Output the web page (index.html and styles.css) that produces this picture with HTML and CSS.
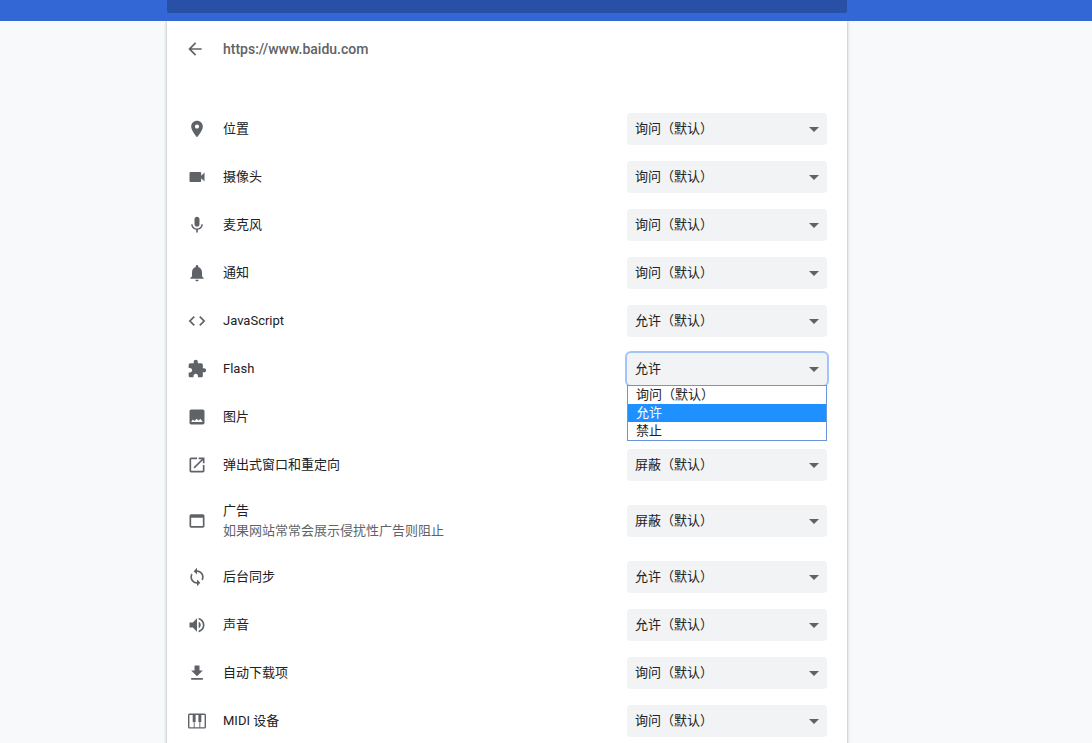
FILE: index.html
```
<!DOCTYPE html>
<html lang="zh-CN">
<head>
<meta charset="utf-8">
<title>设置</title>
<link rel="stylesheet" href="styles.css">
</head>
<body>
<header class="toolbar columns"><div class="search"></div></header>
<main class="columns">
<section class="card">
  <div class="page-head">
    <button class="back" type="button" aria-label="返回"><svg class="icon" viewBox="0 0 24 24"><path d="M20 11H7.83l5.59-5.59L12 4l-8 8 8 8 1.41-1.41L7.83 13H20v-2z"/></svg></button>
    <h1 class="title">https://www.baidu.com</h1>
  </div>
  <div class="list">
    <div class="row">
      <svg class="icon" viewBox="0 0 24 24"><path d="M12 2C8.13 2 5 5.13 5 9c0 5.25 7 13 7 13s7-7.75 7-13c0-3.87-3.13-7-7-7zm0 9.500c-1.380 0-2.500-1.120-2.500-2.500s1.120-2.500 2.500-2.500 2.500 1.120 2.500 2.500-1.120 2.500-2.500 2.500z"/></svg>
      <label class="label" for="location">位置</label>
      <div class="field"><select class="select" id="location"><option>询问（默认）</option><option>允许</option><option>禁止</option></select></div>
    </div>
    <div class="row">
      <svg class="icon" viewBox="0 0 24 24"><path d="M17 10.500V7c0-.55-.45-1-1-1H4c-.55 0-1 .45-1 1v10c0 .55.45 1 1 1h12c.55 0 1-.45 1-1v-3.500l4 4v-11l-4 4z"/></svg>
      <label class="label" for="camera">摄像头</label>
      <div class="field"><select class="select" id="camera"><option>询问（默认）</option><option>允许</option><option>禁止</option></select></div>
    </div>
    <div class="row">
      <svg class="icon" viewBox="0 0 24 24"><path d="M12 14c1.660 0 2.990-1.340 2.990-3L15 5c0-1.660-1.340-3-3-3S9 3.340 9 5v6c0 1.660 1.340 3 3 3zm5.300-3c0 3-2.540 5.100-5.300 5.100S6.700 14 6.700 11H5c0 3.410 2.720 6.230 6 6.720V21h2v-3.280c3.280-.48 6-3.300 6-6.720h-1.700z"/></svg>
      <label class="label" for="mic">麦克风</label>
      <div class="field"><select class="select" id="mic"><option>询问（默认）</option><option>允许</option><option>禁止</option></select></div>
    </div>
    <div class="row">
      <svg class="icon" viewBox="0 0 24 24"><path d="M12 22c1.100 0 2-.9 2-2h-4c0 1.100.89 2 2 2zm6-6v-5c0-3.070-1.640-5.640-4.500-6.320V4c0-.83-.67-1.500-1.500-1.500s-1.500.67-1.500 1.500v.68C7.630 5.360 6 7.920 6 11v5l-2 2v1h16v-1l-2-2z"/></svg>
      <label class="label" for="notify">通知</label>
      <div class="field"><select class="select" id="notify"><option>询问（默认）</option><option>允许</option><option>禁止</option></select></div>
    </div>
    <div class="row">
      <svg class="icon" viewBox="0 0 24 24"><path d="M9.400 16.600L4.800 12l4.600-4.600L8 6l-6 6 6 6 1.400-1.400zm5.200 0l4.600-4.600-4.600-4.600L16 6l6 6-6 6-1.400-1.400z"/></svg>
      <label class="label" for="js">JavaScript</label>
      <div class="field"><select class="select" id="js"><option>允许（默认）</option><option>禁止</option></select></div>
    </div>
    <div class="row">
      <svg class="icon" viewBox="0 0 24 24"><path d="M20.500 11H19V7c0-1.100-.9-2-2-2h-4V3.500C13 2.120 11.880 1 10.500 1S8 2.120 8 3.500V5H4c-1.100 0-1.990.9-1.990 2v3.800H3.500c1.490 0 2.700 1.210 2.700 2.700s-1.210 2.700-2.700 2.700H2V20c0 1.100.9 2 2 2h3.800v-1.500c0-1.490 1.210-2.700 2.700-2.700 1.490 0 2.700 1.210 2.700 2.700V22H17c1.100 0 2-.9 2-2v-4h1.500c1.380 0 2.500-1.120 2.500-2.500S21.880 11 20.500 11z"/></svg>
      <label class="label" for="flash">Flash</label>
      <div class="field">
        <select class="select open" id="flash"><option>询问（默认）</option><option selected>允许</option><option>禁止</option></select>
        <ul class="menu" role="listbox" aria-label="Flash"><li role="option">询问（默认）</li><li class="active" role="option" aria-selected="true">允许</li><li role="option">禁止</li></ul>
      </div>
    </div>
    <div class="row">
      <svg class="icon" viewBox="0 0 24 24"><path d="M21 19V5c0-1.100-.9-2-2-2H5c-1.100 0-2 .9-2 2v14c0 1.100.9 2 2 2h14c1.100 0 2-.9 2-2zM7 15l2 1.800L11.500 14l2.200 2.200L16 14l3 4H5z"/></svg>
      <label class="label" for="images">图片</label>
      <div class="field"><select class="select" id="images"><option>允许（默认）</option><option>禁止</option></select></div>
    </div>
    <div class="row">
      <svg class="icon" viewBox="0 0 24 24"><path d="M19 19H5V5h7V3H5c-1.110 0-2 .9-2 2v14c0 1.100.89 2 2 2h14c1.100 0 2-.9 2-2v-7h-2v7zM14 3v2h3.590l-9.830 9.830 1.410 1.410L19 6.410V10h2V3h-7z"/></svg>
      <label class="label" for="popups">弹出式窗口和重定向</label>
      <div class="field"><select class="select" id="popups"><option>屏蔽（默认）</option><option>允许</option></select></div>
    </div>
    <div class="row tall">
      <svg class="icon" viewBox="0 0 24 24"><path d="M19 4H5c-1.110 0-2 .9-2 2v12c0 1.100.89 2 2 2h14c1.100 0 2-.9 2-2V6c0-1.100-.89-2-2-2zm0 14H5V8h14v10z"/></svg>
      <label class="label" for="ads">广告<span class="sub">如果网站常常会展示侵扰性广告则阻止</span></label>
      <div class="field"><select class="select" id="ads"><option>屏蔽（默认）</option><option>允许</option></select></div>
    </div>
    <div class="row">
      <svg class="icon" viewBox="0 0 24 24"><path d="M12 4V1L8 5l4 4V6c3.310 0 6 2.690 6 6 0 1.010-.25 1.970-.7 2.800l1.460 1.460C19.540 15.030 20 13.570 20 12c0-4.420-3.580-8-8-8zm0 14c-3.310 0-6-2.690-6-6 0-1.010.25-1.970.7-2.800L5.240 7.740C4.460 8.970 4 10.430 4 12c0 4.420 3.580 8 8 8v3l4-4-4-4v3z"/></svg>
      <label class="label" for="sync">后台同步</label>
      <div class="field"><select class="select" id="sync"><option>允许（默认）</option><option>禁止</option></select></div>
    </div>
    <div class="row">
      <svg class="icon" viewBox="0 0 24 24"><path d="M3 9v6h4l5 5V4L7 9H3zm13.500 3c0-1.770-1.020-3.290-2.500-4.030v8.050c1.480-.73 2.500-2.250 2.500-4.020zM14 3.230v2.060c2.890.86 5 3.540 5 6.710s-2.110 5.850-5 6.710v2.060c4.010-.91 7-4.490 7-8.770s-2.990-7.860-7-8.770z"/></svg>
      <label class="label" for="sound">声音</label>
      <div class="field"><select class="select" id="sound"><option>允许（默认）</option><option>禁止</option></select></div>
    </div>
    <div class="row">
      <svg class="icon" viewBox="0 0 24 24"><path d="M19 9h-4V3H9v6H5l7 7 7-7zM5 18v2h14v-2H5z"/></svg>
      <label class="label" for="downloads">自动下载项</label>
      <div class="field"><select class="select" id="downloads"><option>询问（默认）</option><option>允许</option><option>禁止</option></select></div>
    </div>
    <div class="row">
      <svg class="icon" viewBox="0 0 20 20"><path fill-rule="evenodd" d="M2.500 2.600h15A1.500 1.500 0 0 1 19 4.100v12a1.500 1.500 0 0 1-1.500 1.500h-15A1.500 1.500 0 0 1 1 16.100v-12A1.500 1.500 0 0 1 2.500 2.600zM2.400 4v12.200h4.300V11h-1V4zM8.600 4v7h-1v5.200h4.800V11h-1V4zM14.300 4v7h-1v5.200h4.300V4z"/></svg>
      <label class="label" for="midi">MIDI 设备</label>
      <div class="field"><select class="select" id="midi"><option>询问（默认）</option><option>允许</option><option>禁止</option></select></div>
    </div>
  </div>
</section>
</main>
</body>
</html>
```
FILE: styles.css
```
* { box-sizing: border-box; }
html { scrollbar-width: none; }
body {
  margin: 0;
  background: #f8f9fa;
  color: #202124;
  font: 13px/20px Roboto, "Noto Sans CJK SC", sans-serif;
}
.columns {
  display: grid;
  grid-template-columns: 167fr minmax(auto, 680px) 245fr;
}
.toolbar {
  height: 21px;
  background: #3367d6;
}
.search {
  grid-column: 2;
  height: 13px;
  background: #2850a7;
  border-radius: 0 0 2px 2px;
}
.card {
  grid-column: 2;
  background: #fff;
  box-shadow: 0 1px 2px rgba(60, 64, 67, .3), 0 1px 3px 1px rgba(60, 64, 67, .15);
  padding: 0 20px;
  clip-path: inset(0 -5px);
}
.page-head {
  display: flex;
  align-items: center;
  height: 56px;
}
.back {
  display: flex;
  width: 36px;
  margin: 0 0 0 -2px;
  padding: 0;
  border: 0;
  background: none;
}
.title {
  margin: 0 0 0 2px;
  color: #5f6368;
  font-size: 14px;
  font-weight: 500;
}
.list { padding: 28px 0 20px; }
.icon {
  flex: none;
  width: 20px;
  height: 20px;
  fill: #5f6368;
}
.row {
  display: flex;
  align-items: center;
  gap: 16px;
  min-height: 48px;
}
.tall { min-height: 64px; }
.label { flex: 1; }
.sub {
  display: block;
  color: #5f6368;
}
.field { position: relative; width: 200px; }
.select {
  display: block;
  appearance: none;
  width: 100%;
  height: 32px;
  padding: 0 24px 0 8px;
  border: 0;
  border-radius: 4px;
  outline: 0;
  color: inherit;
  font: inherit;
  background: #f1f3f4 url("data:image/svg+xml,%3Csvg xmlns='http://www.w3.org/2000/svg' width='10' height='5'%3E%3Cpath d='M0 0h10L5 5z' fill='%235f6368'/%3E%3C/svg%3E") no-repeat right 8px top 14px;
}
.open { box-shadow: 0 0 0 2px #a3c4f8; }
.menu {
  position: absolute;
  z-index: 1;
  top: 100%;
  left: 0;
  width: 100%;
  margin: 0;
  padding: 0;
  border: 1px solid #6a95d8;
  background: #fff;
  list-style: none;
  line-height: 18px;
}
.menu li { padding: 0 8px; }
.menu .active {
  background: #1e90ff;
  color: #fff;
}
```
